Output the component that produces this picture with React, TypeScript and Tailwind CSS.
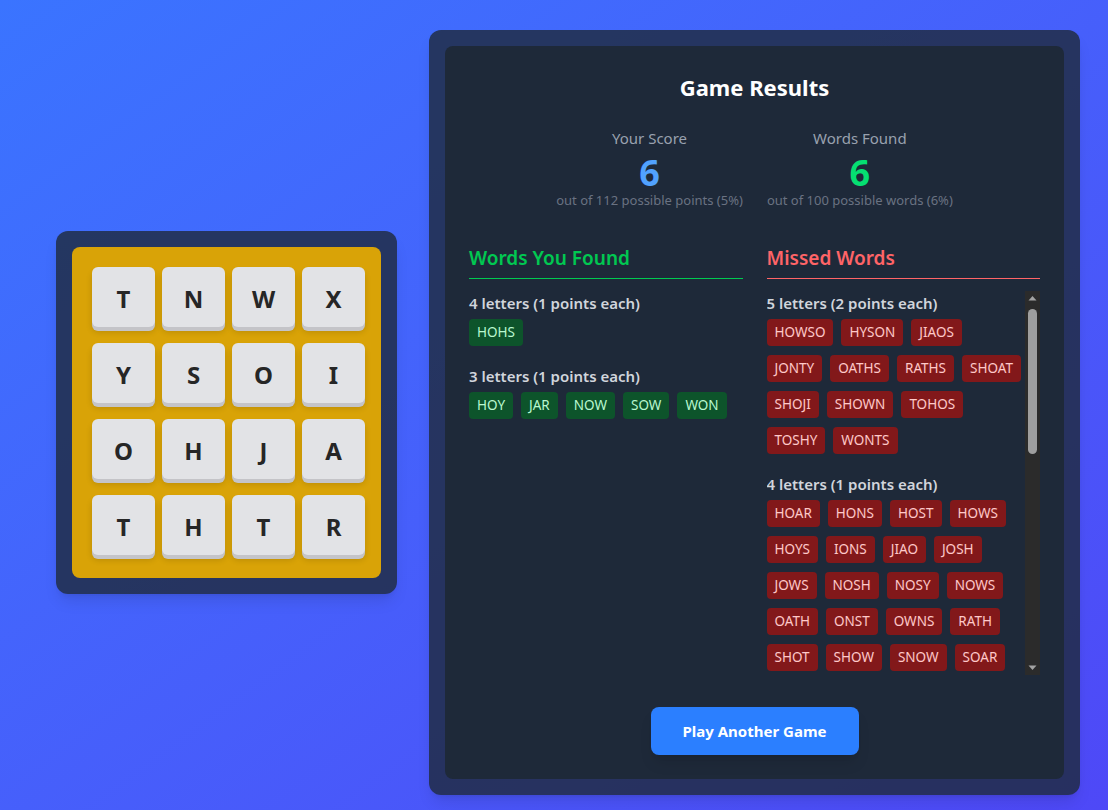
import React from "react";

const board = [
  ["T", "N", "W", "X"],
  ["Y", "S", "O", "I"],
  ["O", "H", "J", "A"],
  ["T", "H", "T", "R"],
];

type Group = { label: string; rows: string[][] };

const found: Group[] = [
  { label: "4 letters (1 points each)", rows: [["HOHS"]] },
  { label: "3 letters (1 points each)", rows: [["HOY", "JAR", "NOW", "SOW", "WON"]] },
];

const missed: Group[] = [
  {
    label: "5 letters (2 points each)",
    rows: [
      ["HOWSO", "HYSON", "JIAOS"],
      ["JONTY", "OATHS", "RATHS", "SHOAT"],
      ["SHOJI", "SHOWN", "TOHOS"],
      ["TOSHY", "WONTS"],
    ],
  },
  {
    label: "4 letters (1 points each)",
    rows: [
      ["HOAR", "HONS", "HOST", "HOWS"],
      ["HOYS", "IONS", "JIAO", "JOSH"],
      ["JOWS", "NOSH", "NOSY", "NOWS"],
      ["OATH", "ONST", "OWNS", "RATH"],
      ["SHOT", "SHOW", "SNOW", "SOAR"],
      ["SOHO", "SOTH", "SOWN", "STOA"],
      ["SWOT", "THON", "TOHO", "TOSH"],
      ["TOWN", "TOWS", "TOYS", "WONT"],
    ],
  },
  {
    label: "3 letters (1 points each)",
    rows: [
      ["AHI", "AIS", "ART", "ASH", "HAH"],
      ["HAJ", "HAO", "HAT", "HOA", "HOH"],
      ["HON", "HOO", "HOS", "HOT", "HOW"],
      ["HOX", "IOS", "ION", "JAI", "JAW"],
      ["JOT", "JOW", "NOH", "NOO", "NOS"],
      ["NOT", "NOY", "OAT", "OHO", "OHS"],
      ["OIS", "ONS", "OOH", "OOT", "OWN"],
      ["OYS", "RAH", "RAJ", "RAT", "SHA"],
      ["SOH", "SON", "SOT", "SOY", "TAJ"],
      ["TAO", "THO", "TOW", "TOY", "YOW"],
    ],
  },
];

const WordGroups = ({ groups, missedStyle }: { groups: Group[]; missedStyle?: boolean }) => (
  <>
    {groups.map((g) => (
      <div key={g.label} className="mb-5">
        <h4 className="text-[15px] leading-5 font-semibold text-gray-300 mb-[6px]">{g.label}</h4>
        <div className="flex flex-col gap-[9px]">
          {g.rows.map((row, i) => (
            <div key={i} className="flex gap-2">
              {row.map((w) => (
                <span
                  key={w}
                  className={
                    missedStyle
                      ? "px-2 py-1 rounded text-[13.5px] leading-[19px] bg-red-900 text-red-200"
                      : "px-2 py-1 rounded text-[13.5px] leading-[19px] bg-green-900 text-green-200"
                  }
                >
                  {w}
                </span>
              ))}
            </div>
          ))}
        </div>
      </div>
    ))}
  </>
);

// the list scrolls in the original; headless hides native scrollbars, so draw one
const ScrollBar = () => (
  <div className="w-[15px] h-full bg-[#2b2b2b] flex flex-col items-center shrink-0">
    <svg width="15" height="15" viewBox="0 0 15 15" className="shrink-0">
      <path d="M3.5 9.5 L7.5 5 L11.5 9.5 Z" fill="#a3a3a3" />
    </svg>
    <div className="w-[9px] h-[145px] mt-[3px] rounded-full bg-[#9f9f9f]" />
    <div className="flex-1" />
    <svg width="15" height="15" viewBox="0 0 15 15" className="shrink-0">
      <path d="M3.5 5.5 L7.5 10 L11.5 5.5 Z" fill="#a3a3a3" />
    </svg>
  </div>
);

export default function App() {
  return (
    <div
      className="min-h-[810px] w-full bg-linear-to-br from-[#3a74ff] to-[#4e48f7] flex items-center pl-14 pt-[30px] pb-[15px] gap-8"
      style={{ fontFamily: '"Noto Sans", "Open Sans", sans-serif' }}
    >
      {/* board */}
      <div className="bg-gray-800/80 rounded-xl p-4 shadow-lg">
        <div className="bg-[#d9a307] rounded-lg pl-5 pt-5 pb-[23px] w-[309px]">
          <div className="grid grid-cols-[repeat(4,63px)] gap-x-[7px] gap-y-4">
            {board.flat().map((l, i) => (
              <div
                key={i}
                className="h-[60px] bg-[#e2e3e6] rounded-md flex items-center justify-center pt-1 text-2xl font-bold text-[#262626] shadow-[0_4px_0_#c4c4c8,0_5px_6px_rgba(0,0,0,0.15)]"
              >
                {l}
              </div>
            ))}
          </div>
        </div>
      </div>

      {/* results */}
      <div className="bg-gray-800/80 rounded-xl p-4 w-[651px] shadow-lg">
        <div className="bg-gray-800 rounded-lg px-6 pt-[25px] pb-6">
          <h2 className="text-[22px] leading-8 font-bold text-white text-center mb-[23px]">Game Results</h2>

          <div className="flex justify-center gap-6 mb-[36px]">
            <div className="text-center">
              <div className="text-[15px] leading-6 text-gray-400 mb-[3px]">Your Score</div>
              <div className="text-4xl leading-10 font-bold text-blue-400">6</div>
              <div className="text-[13px] leading-4 -mt-px text-gray-500">out of 112 possible points (5%)</div>
            </div>
            <div className="text-center">
              <div className="text-[15px] leading-6 text-gray-400 mb-[3px]">Words Found</div>
              <div className="text-4xl leading-10 font-bold text-green-400">6</div>
              <div className="text-[13px] leading-4 -mt-px text-gray-500">out of 100 possible words (6%)</div>
            </div>
          </div>

          <div className="grid grid-cols-2 gap-6">
            <div>
              <h3 className="text-[19px] leading-7 font-semibold text-green-500 pb-[6px] border-b border-green-500 mb-3">
                Words You Found
              </h3>
              <div className="pt-[2px]">
                <WordGroups groups={found} />
              </div>
            </div>
            <div>
              <h3 className="text-[19px] leading-7 font-semibold text-red-400 pb-[6px] border-b border-red-400 mb-3">
                Missed Words
              </h3>
              <div className="h-96 flex">
                <div className="flex-1 overflow-hidden pt-[2px]">
                  <WordGroups groups={missed} missedStyle />
                </div>
                <ScrollBar />
              </div>
            </div>
          </div>

          <div className="flex justify-center mt-8">
            <button className="bg-blue-500 text-white font-bold text-[15px] leading-6 px-8 py-3 rounded-lg shadow-lg">
              Play Another Game
            </button>
          </div>
        </div>
      </div>
    </div>
  );
}
